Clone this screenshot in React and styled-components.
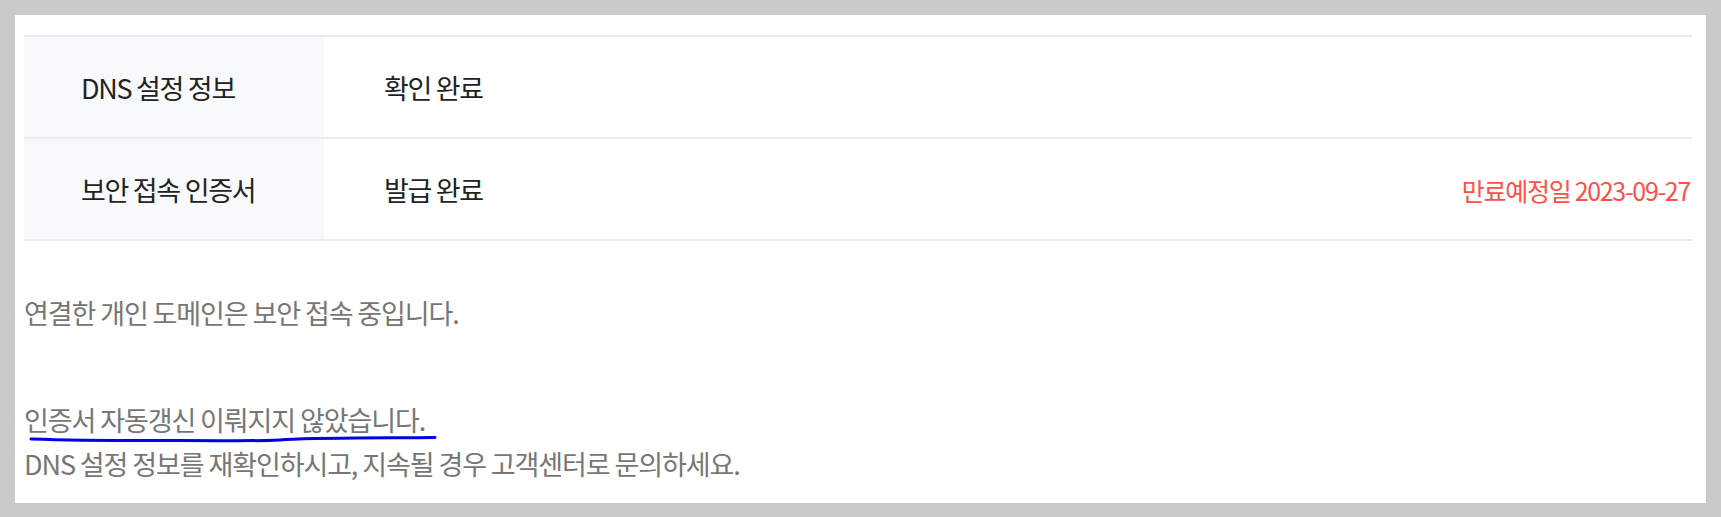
import React from "react";
import styled, { createGlobalStyle } from "styled-components";

const Global = createGlobalStyle`
  html, body { margin: 0; padding: 0; }
  body {
    background: #cacaca;
    font-family: "Noto Sans CJK KR", "Noto Sans", sans-serif;
  }
`;

const Page = styled.div`
  padding: 15px;
`;

const Panel = styled.section`
  background: #fff;
  padding: 20px 14px 17px 9px;
  letter-spacing: -1.3px;
`;

const Table = styled.div`
  display: flex;
  flex-direction: column;
  border-top: 2px solid #ebebef;
`;

const Row = styled.div`
  display: flex;
  height: 100px;
  border-bottom: 2px solid #ebebef;
`;

const Label = styled.div`
  width: 243px;
  flex: none;
  background: #f8f9fb;
  padding-left: 57px;
  display: flex;
  align-items: center;
  font-size: 27px;
  color: #222;
`;

const Value = styled.div`
  flex: 1;
  display: flex;
  align-items: center;
  justify-content: space-between;
  padding-left: 60px;
  font-size: 27px;
  color: #222;
`;

const Expire = styled.span`
  color: #ff5046;
  font-size: 25px;
  letter-spacing: -1.3px;
  margin-right: 2px;
  padding-top: 2px;
`;

const Notice = styled.p`
  margin: ${(p) => p.$mt}px 0 0 0;
  font-size: 27px;
  line-height: 44px;
  letter-spacing: -1.1px;
  color: #767676;
`;

const Marked = styled.span`
  position: relative;
  display: inline-block;
`;

const Scribble = styled.svg`
  position: absolute;
  left: 6px;
  top: 37px;
  width: 410px;
  height: 10px;
  overflow: visible;
  pointer-events: none;
`;

export default function App() {
  return (
    <>
      <Global />
      <Page>
        <Panel>
          <Table>
            <Row>
              <Label>DNS 설정 정보</Label>
              <Value>확인 완료</Value>
            </Row>
            <Row>
              <Label>보안 접속 인증서</Label>
              <Value>
                <span>발급 완료</span>
                <Expire>만료예정일 2023-09-27</Expire>
              </Value>
            </Row>
          </Table>
          <Notice $mt={50}>연결한 개인 도메인은 보안 접속 중입니다.</Notice>
          <Notice $mt={63}>
            <Marked>
              인증서 자동갱신 이뤄지지 않았습니다.
              <Scribble viewBox="0 0 410 10">
                <path
                  d="M1 4 C 60 6, 110 5.5, 150 5.5 C 200 5.5, 240 6.5, 255 4.5 C 300 2.5, 360 3, 405 2.5"
                  stroke="#0000e6"
                  strokeWidth="3"
                  fill="none"
                  strokeLinecap="round"
                />
              </Scribble>
            </Marked>
            <br />
            DNS 설정 정보를 재확인하시고, 지속될 경우 고객센터로 문의하세요.
          </Notice>
        </Panel>
      </Page>
    </>
  );
}
